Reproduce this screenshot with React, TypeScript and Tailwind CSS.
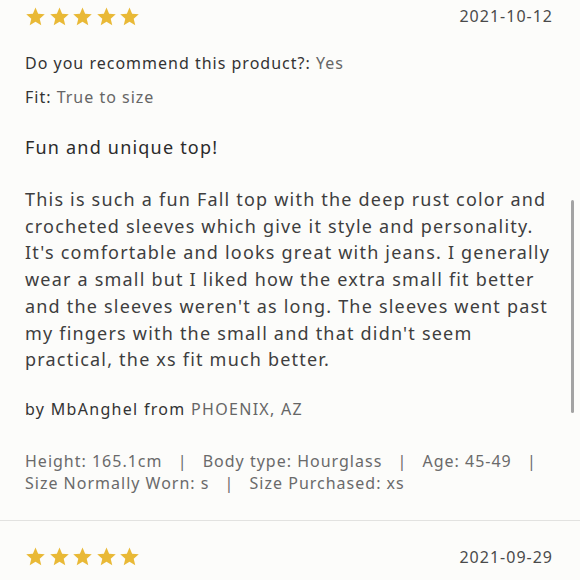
import { useState } from 'react'

const Star = () => (
    <svg viewBox="0 0 24 24" className="h-[21px] w-[21px]" fill="#e9b936">
        <path d="M12 1.8l3 7.1 7.6.6-5.8 5 1.8 7.5L12 18l-6.6 4 1.8-7.5-5.8-5 7.6-.6z" />
    </svg>
)

const Stars = () => (
    <div className="flex gap-[2.5px]">
        {[0, 1, 2, 3, 4].map((i) => (
            <Star key={i} />
        ))}
    </div>
)

const bodyLines = [
    'This is such a fun Fall top with the deep rust color and',
    'crocheted sleeves which give it style and personality.',
    "It's comfortable and looks great with jeans. I generally",
    'wear a small but I liked how the extra small fit better',
    "and the sleeves weren't as long. The sleeves went past",
    "my fingers with the small and that didn't seem",
    'practical, the xs fit much better.',
]

const Sep = () => <span className="px-[10px]">|</span>

const Review = () => (
    <div className="px-[25px] pb-[26px]">
        <div className="flex h-[32px] items-center justify-between">
            <Stars />
            <span className="pr-[2px] text-[16px] tracking-[1px] text-[#4a4a4a]">
                2021-10-12
            </span>
        </div>
        <div className="mt-[18px] text-[16px] leading-[26px] tracking-[1px]">
            <span className="text-[#333]">Do you recommend this product?: </span>
            <span className="text-[#666]">Yes</span>
        </div>
        <div className="mt-[8px] text-[16px] leading-[26px] tracking-[1px]">
            <span className="text-[#333]">Fit: </span>
            <span className="text-[#666]">True to size</span>
        </div>
        <h3 className="mt-[24px] text-[18px] leading-[26px] tracking-[1.2px] text-[#2b2b2b]">
            Fun and unique top!
        </h3>
        <p className="mt-[26px] text-[18px] leading-[26.7px] tracking-[1.2px] text-[#3e3e3e]">
            {bodyLines.map((l, i) => (
                <span key={i} className="block whitespace-nowrap">
                    {l}
                </span>
            ))}
        </p>
        <div className="mt-[24px] text-[16px] leading-[24px] tracking-[1.3px]">
            <span className="text-[#333]">by MbAnghel from </span>
            <span className="text-[#666]">PHOENIX, AZ</span>
        </div>
        <div className="mt-[29px] text-[16px] leading-[22px] tracking-[1px] text-[#6a6a6a]">
            <div className="whitespace-nowrap">
                Height: 165.1cm <Sep /> Body type: Hourglass <Sep /> Age: 45-49 <Sep />
            </div>
            <div className="whitespace-nowrap">
                Size Normally Worn: s <Sep /> Size Purchased: xs
            </div>
        </div>
    </div>
)

export default function App() {
    const [dates] = useState(['2021-10-12', '2021-09-29'])

    return (
        <div
            className="relative h-[580px] w-[580px] overflow-hidden bg-[#fcfcfa]"
            style={{ fontFamily: '"Noto Sans", sans-serif' }}
        >
            <Review />
            <div className="border-t border-[#e2e2e0]" />
            <div className="flex h-[72px] items-center justify-between px-[25px]">
                <Stars />
                <span className="pr-[2px] text-[16px] tracking-[1px] text-[#4a4a4a]">
                    {dates[1]}
                </span>
            </div>
            <div className="absolute right-[6px] top-[200px] h-[213px] w-[3px] rounded-full bg-[#a3a3a3]" />
        </div>
    )
}
